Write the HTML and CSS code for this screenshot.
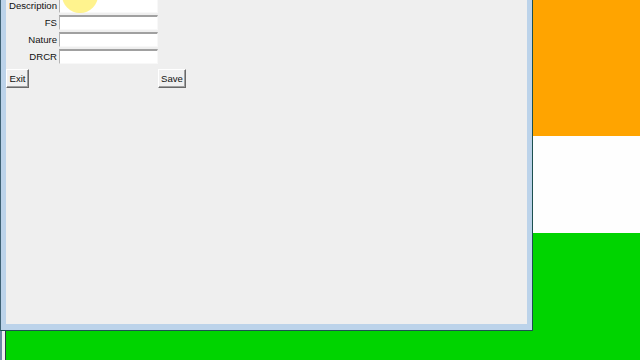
FILE: index.html
```html
<!DOCTYPE html>
<html>
<head>
<meta charset="utf-8">
<link rel="stylesheet" href="styles.css">
</head>
<body>
<div class="desktop">
  <div class="back-window"></div>
  <div class="window">
    <div class="client">
      <div class="form">
        <label class="lbl">Description</label><div class="entry"></div><div></div>
        <label class="lbl">FS</label><div class="entry"></div><div></div>
        <label class="lbl">Nature</label><div class="entry"></div><div></div>
        <label class="lbl">DRCR</label><div class="entry"></div><div></div>
        <button class="btn btn-exit">Exit</button><div></div><button class="btn btn-save">Save</button>
      </div>
    </div>
  </div>
  <div class="cursor-halo"></div>
</div>
</body>
</html>
```
FILE: styles.css
```css
html, body {
  margin: 0;
  padding: 0;
}
body {
  width: 640px;
  height: 360px;
  overflow: hidden;
  font-family: "Liberation Sans", Arial, sans-serif;
}
.desktop {
  position: relative;
  width: 640px;
  height: 360px;
  background: linear-gradient(#ffa400 0 136px, #fefefe 136px 233px, #00d400 233px);
}
.back-window {
  position: absolute;
  left: 0;
  top: 0;
  width: 3px;
  height: 360px;
  background: #eef0f3;
  border-left: 2px solid #6d8aa8;
  border-right: 1px solid #2b3a44;
}
.window {
  position: absolute;
  left: 0;
  top: -20px;
  background: #bcd3ea;
  border: 1px solid #3f6275;
  border-right-color: #1d5050;
  border-bottom-color: #1d5050;
  padding: 0 4px 6px 5px;
  box-sizing: content-box;
  width: 522px;
  height: 343px;
}
.client {
  width: 521px;
  height: 343px;
  background: #efefef;
  position: relative;
}
.form {
  position: absolute;
  left: 0;
  top: 16.6px;
  display: grid;
  grid-template-columns: 52px 100px auto;
  grid-template-rows: repeat(4, 16.7px) auto;
  align-items: center;
  font-size: 9.6px;
  color: #111;
}
.lbl {
  text-align: right;
  padding-right: 1px;
}
.entry {
  height: 12px;
  margin-left: 1px;
  background: #ffffff;
  border-top: 2px solid #a0a0a0;
  border-left: 1px solid #b4b4b4;
  border-right: 1px solid #f8f8f8;
  border-bottom: 1px solid #f8f8f8;
  box-sizing: content-box;
  width: 97px;
}
.btn {
  margin-top: 4.5px;
  height: 19px;
  padding: 0 2px;
  font-family: "Liberation Sans", Arial, sans-serif;
  font-size: 9.6px;
  color: #111;
  background: #f0f0f0;
  border: 1px solid;
  border-color: #ffffff #696969 #696969 #ffffff;
  box-shadow: inset -1px -1px 0 #a0a0a0;
  justify-self: start;
  align-self: start;
}
.btn-exit {
  width: 23px;
}
.btn-save {
  width: 28px;
}
.cursor-halo {
  position: absolute;
  left: 62px;
  top: -23px;
  width: 36px;
  height: 36px;
  border-radius: 50%;
  background: rgba(255, 234, 50, 0.55);
}
```
